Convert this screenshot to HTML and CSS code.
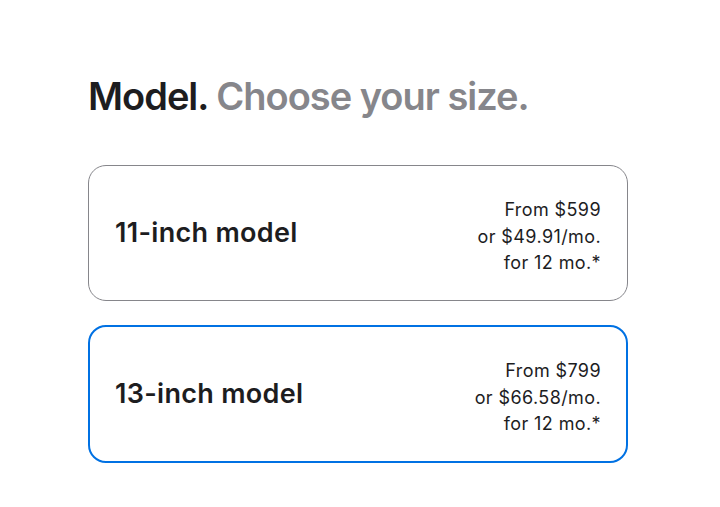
FILE: index.html
```html
<!DOCTYPE html>
<html>
<head>
<meta charset="utf-8">
<link rel="stylesheet" href="styles.css">
</head>
<body>
<main class="page">
  <h2 class="title"><span class="title-main">Model.</span> <span class="title-sub">Choose your size.</span></h2>
  <div class="options">
    <div class="option">
      <span class="option-name">11-inch model</span>
      <span class="option-price">From $599<br>or $49.91/mo.<br>for 12 mo.*</span>
    </div>
    <div class="option selected">
      <span class="option-name">13-inch model</span>
      <span class="option-price">From $799<br>or $66.58/mo.<br>for 12 mo.*</span>
    </div>
  </div>
</main>
</body>
</html>
```
FILE: styles.css
```css
html, body {
  margin: 0;
  padding: 0;
  background: #fff;
}
body {
  font-family: Inter, "Noto Sans", sans-serif;
  color: #1d1d1f;
}
.page {
  padding: 74px 92px 0 88px;
}
.title {
  margin: 0 0 47px 0;
  font-size: 38px;
  font-weight: 600;
  letter-spacing: -1px;
  line-height: 44px;
}
.title-main { color: #1d1d1f; }
.title-sub { color: #86868b; }
.options {
  display: flex;
  flex-direction: column;
  gap: 24px;
}
.option {
  display: flex;
  align-items: center;
  justify-content: space-between;
  border: 1px solid #86868b;
  border-radius: 18px;
  padding: 0 26px;
  height: 136px;
  box-sizing: border-box;
}
.option.selected {
  border: 2px solid #0071e3;
  padding: 0 25px;
  height: 138px;
}
.option-name {
  font-size: 27px;
  font-weight: 600;
  letter-spacing: 0.3px;
  margin-top: -1px;
}
.option-price {
  text-align: right;
  font-size: 18px;
  line-height: 26.5px;
  letter-spacing: 0.4px;
  margin-top: 8px;
}
```
